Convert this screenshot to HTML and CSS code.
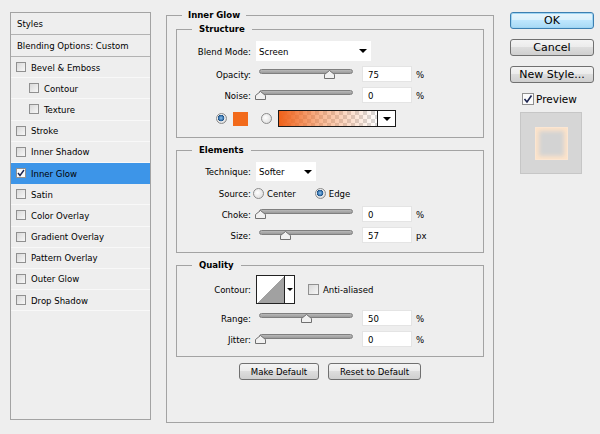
FILE: index.html
```html
<!DOCTYPE html>
<html>
<head>
  <title>Layer Style - Inner Glow</title>
  <link rel="stylesheet" href="styles.css">
</head>
<body>
  <div class="dialog">
    <!-- Left list of styles -->
    <div class="styles-list">
      <div class="list-head">Styles</div>
      <div class="list-head">Blending Options: Custom</div>
      <div class="list-item"><span class="check"></span>Bevel &amp; Emboss</div>
      <div class="list-item sub"><span class="check"></span>Contour</div>
      <div class="list-item sub"><span class="check"></span>Texture</div>
      <div class="list-item"><span class="check"></span>Stroke</div>
      <div class="list-item"><span class="check"></span>Inner Shadow</div>
      <div class="list-item active">
        <span class="check checked"><svg width="8" height="8" viewBox="0 0 8 8"><path d="M1 4 L3 6.5 L7 1" fill="none" stroke="#1b2450" stroke-width="1.4"/></svg></span>Inner Glow
      </div>
      <div class="list-item"><span class="check"></span>Satin</div>
      <div class="list-item"><span class="check"></span>Color Overlay</div>
      <div class="list-item"><span class="check"></span>Gradient Overlay</div>
      <div class="list-item"><span class="check"></span>Pattern Overlay</div>
      <div class="list-item"><span class="check"></span>Outer Glow</div>
      <div class="list-item"><span class="check"></span>Drop Shadow</div>
    </div>

    <!-- Inner Glow settings -->
    <fieldset class="panel">
      <legend>Inner Glow</legend>

      <fieldset class="group structure">
        <legend>Structure</legend>
        <div class="row row-select">
          <span class="label">Blend Mode:</span>
          <div class="select blend"><span>Screen</span><span class="arrow"></span></div>
        </div>
        <div class="row row-field gap5">
          <span class="label">Opacity:</span>
          <div class="slider"><div class="track"><span class="thumb" style="left: 75%"><svg width="11" height="9" viewBox="0 0 11 9"><path d="M0.5 8.5V4.5L5.5 0.5L10.5 4.5V8.5Z" fill="#f1f1f1" stroke="#707070"/></svg></span></div></div>
          <input class="field" type="text" value="75">
          <span class="unit">%</span>
        </div>
        <div class="row row-field gap5">
          <span class="label">Noise:</span>
          <div class="slider"><div class="track"><span class="thumb" style="left: 0%"><svg width="11" height="9" viewBox="0 0 11 9"><path d="M0.5 8.5V4.5L5.5 0.5L10.5 4.5V8.5Z" fill="#f1f1f1" stroke="#707070"/></svg></span></div></div>
          <input class="field" type="text" value="0">
          <span class="unit">%</span>
        </div>
        <div class="row row-color gap7">
          <span class="radio on"></span>
          <span class="swatch"></span>
          <span class="radio second"></span>
          <div class="gradient-pick">
            <span class="gradient"></span>
            <span class="grad-drop"><span class="arrow"></span></span>
          </div>
        </div>
      </fieldset>

      <fieldset class="group elements">
        <legend>Elements</legend>
        <div class="row row-tech">
          <span class="label">Technique:</span>
          <div class="select technique"><span>Softer</span><span class="arrow"></span></div>
        </div>
        <div class="row row-source gap5">
          <span class="label tight">Source:</span>
          <span class="radio"></span>
          <span class="radio-text">Center</span>
          <span class="radio on edge"></span>
          <span class="radio-text">Edge</span>
        </div>
        <div class="row row-field gap6">
          <span class="label">Choke:</span>
          <div class="slider"><div class="track"><span class="thumb" style="left: 0%"><svg width="11" height="9" viewBox="0 0 11 9"><path d="M0.5 8.5V4.5L5.5 0.5L10.5 4.5V8.5Z" fill="#f1f1f1" stroke="#707070"/></svg></span></div></div>
          <input class="field" type="text" value="0">
          <span class="unit">%</span>
        </div>
        <div class="row row-field gap5">
          <span class="label">Size:</span>
          <div class="slider"><div class="track"><span class="thumb" style="left: 27%"><svg width="11" height="9" viewBox="0 0 11 9"><path d="M0.5 8.5V4.5L5.5 0.5L10.5 4.5V8.5Z" fill="#f1f1f1" stroke="#707070"/></svg></span></div></div>
          <input class="field" type="text" value="57">
          <span class="unit">px</span>
        </div>
      </fieldset>

      <fieldset class="group quality">
        <legend>Quality</legend>
        <div class="row row-contour">
          <span class="label">Contour:</span>
          <div class="contour">
            <span class="curve"></span>
            <span class="contour-drop"><span class="arrow small"></span></span>
          </div>
          <span class="check anti"></span>
          <span class="anti-text">Anti-aliased</span>
        </div>
        <div class="row row-field gap6">
          <span class="label">Range:</span>
          <div class="slider"><div class="track"><span class="thumb" style="left: 50%"><svg width="11" height="9" viewBox="0 0 11 9"><path d="M0.5 8.5V4.5L5.5 0.5L10.5 4.5V8.5Z" fill="#f1f1f1" stroke="#707070"/></svg></span></div></div>
          <input class="field" type="text" value="50">
          <span class="unit">%</span>
        </div>
        <div class="row row-field gap5">
          <span class="label">Jitter:</span>
          <div class="slider"><div class="track"><span class="thumb" style="left: 0%"><svg width="11" height="9" viewBox="0 0 11 9"><path d="M0.5 8.5V4.5L5.5 0.5L10.5 4.5V8.5Z" fill="#f1f1f1" stroke="#707070"/></svg></span></div></div>
          <input class="field" type="text" value="0">
          <span class="unit">%</span>
        </div>
      </fieldset>

      <div class="defaults">
        <button class="btn make-default">Make Default</button>
        <button class="btn reset-default">Reset to Default</button>
      </div>
    </fieldset>

    <!-- Dialog buttons and preview -->
    <div class="actions">
      <button class="btn big ok">OK</button>
      <button class="btn big">Cancel</button>
      <button class="btn big">New Style...</button>
      <div class="preview-row">
        <span class="check checked preview-check"><svg width="10" height="10" viewBox="0 0 10 10"><path d="M1.5 5 L4 8 L8.5 1.5" fill="none" stroke="#1b2450" stroke-width="1.6"/></svg></span>
        <span>Preview</span>
      </div>
      <div class="preview-box">
        <div class="preview-swatch"></div>
      </div>
    </div>
  </div>
</body>
</html>
```

FILE: styles.css
```css
/*Page*/
body {
  margin: 0;
  background-color: #eeeeee;
  color: #000;
  font-family: "DejaVu Sans Condensed", "DejaVu Sans", sans-serif;
  font-size: 9.5px;
}
.dialog {
  display: flex;
  align-items: flex-start;
  padding: 8px 0 0 10px;
}
/*Styles list on the left*/
.styles-list {
  box-sizing: border-box;
  width: 141px;
  height: 408px;
  margin-top: 4px;
  border: 1px solid #a3a3a3;
}
.list-head {
  height: 21px;
  line-height: 21px;
  padding-left: 6px;
  border-bottom: 1px solid #b2b2b2;
}
.list-item {
  display: flex;
  align-items: center;
  box-sizing: border-box;
  height: 21.2px;
  padding-left: 5px;
  border-bottom: 1px solid #f8f8f8;
}
.list-item.sub {
  padding-left: 18px;
}
.list-item.active {
  background-color: #3d95e8;
  border-bottom-color: #3d95e8;
}
/*Checkbox*/
.check {
  display: inline-flex;
  align-items: center;
  justify-content: center;
  box-sizing: border-box;
  width: 10px;
  height: 10px;
  margin-right: 5px;
  border: 1px solid #909090;
  background: linear-gradient(135deg, #d9d9d9, #f7f7f7);
}
.check.checked {
  background: #fbfbfb;
}
/*Middle panel*/
.panel {
  box-sizing: border-box;
  width: 328px;
  height: 415px;
  margin: 0 0 0 15px;
  padding: 0 9px;
  border: 1px solid #a3a3a3;
  min-width: 0;
}
.panel > legend,
.group > legend {
  font-weight: bold;
  line-height: 14px;
}
.panel > legend {
  margin-left: 6px;
  padding: 0 6px;
}
.group {
  display: flex;
  flex-direction: column;
  margin: 0;
  padding: 5px 0 9px 0;
  border: 1px solid #a3a3a3;
  min-width: 0;
}
.group > legend {
  margin-left: 15px;
  padding: 0 7px;
}
.structure {
  padding-bottom: 10px;
}
.elements,
.quality {
  margin-top: 5px;
}
.quality {
  padding-top: 3px;
}
/*Rows*/
.row {
  display: flex;
  align-items: center;
}
.gap5 { margin-top: 5px; }
.gap6 { margin-top: 6px; }
.gap7 { margin-top: 7px; }
.row-select { height: 20px; }
.row-field { height: 16px; }
.row-color { height: 17px; padding-left: 39px; }
.row-tech { height: 19px; }
.row-source { height: 14px; }
.row-contour { height: 29px; }
.label {
  flex-shrink: 0;
  width: 74px;
  margin-right: 5px;
  text-align: right;
}
.label.tight {
  margin-right: 2px;
}
/*Dropdowns*/
.select {
  display: flex;
  align-items: center;
  justify-content: space-between;
  box-sizing: border-box;
  height: 100%;
  padding: 0 4px 0 3px;
  background-color: #fff;
}
.select.blend { width: 115px; }
.select.technique { width: 60px; }
.arrow {
  width: 0;
  height: 0;
  border-left: 4px solid transparent;
  border-right: 4px solid transparent;
  border-top: 4px solid #000;
}
.arrow.small {
  border-left-width: 3px;
  border-right-width: 3px;
  border-top-width: 3px;
}
/*Sliders*/
.slider {
  flex-shrink: 0;
  width: 100px;
  height: 16px;
}
.track {
  position: relative;
  box-sizing: border-box;
  height: 5px;
  margin: 3px 3px 0;
  border: 1px solid #7f7f7f;
  border-radius: 3px;
  background: linear-gradient(#b9b9b9, #9a9a9a);
}
.thumb {
  position: absolute;
  top: 0;
  width: 11px;
  height: 9px;
  margin-left: -5px;
  display: block;
  line-height: 0;
}
.field {
  box-sizing: border-box;
  width: 50px;
  height: 16px;
  margin: 0 0 0 6px;
  padding: 0 0 0 5px;
  border: 1px solid #e4e4e4;
  background-color: #fff;
  font: inherit;
  color: #000;
}
.unit {
  margin-left: 4px;
}
/*Radio buttons*/
.radio {
  flex-shrink: 0;
  box-sizing: border-box;
  width: 11px;
  height: 11px;
  border: 1px solid #8c8c8c;
  border-radius: 50%;
  background: radial-gradient(circle at 40% 40%, #ffffff, #d6d6d6);
}
.radio.on {
  background: radial-gradient(circle at 45% 45%, #8ec2ee 0, #2d6aa5 2.5px, #1d4b7a 3px, #f2f2f2 3.6px, #d8d8d8 5px);
}
.radio.second { margin-left: 13px; }
.radio.edge { margin-left: 19px; }
.radio-text { margin-left: 3px; }
/*Colour row*/
.swatch {
  width: 15px;
  height: 14px;
  margin-left: 6px;
  background-color: #f26a1b;
}
.gradient-pick {
  display: flex;
  box-sizing: border-box;
  width: 118px;
  height: 17px;
  margin-left: 6px;
  border: 1px solid #1a1a1a;
}
.gradient {
  flex: 1;
  background: linear-gradient(to right, #f0621a, rgba(242, 106, 27, 0.45) 45%, rgba(242, 106, 27, 0)),
    repeating-conic-gradient(#d9d9d9 0 25%, #ffffff 0 50%) 0 0 / 8px 8px;
}
.grad-drop {
  display: flex;
  align-items: center;
  justify-content: center;
  width: 17px;
  border-left: 1px solid #1a1a1a;
  background-color: #fff;
}
/*Contour picker*/
.contour {
  display: flex;
  box-sizing: border-box;
  width: 39px;
  height: 29px;
  border: 1px solid #222;
}
.curve {
  flex: 1;
  background: linear-gradient(to top left, #a1a1a1 50%, #ffffff 50%);
}
.contour-drop {
  display: flex;
  align-items: center;
  justify-content: center;
  width: 9px;
  border-left: 1px solid #222;
  background-color: #fff;
}
.check.anti {
  width: 11px;
  height: 11px;
  margin: 0 0 0 13px;
}
.anti-text {
  margin-left: 4px;
}
/*Buttons*/
.btn {
  box-sizing: border-box;
  height: 17px;
  padding: 0;
  border: 1px solid #707070;
  border-radius: 3px;
  background: linear-gradient(#f4f4f4, #ebebeb 50%, #dddddd 50%, #cfcfcf);
  font: inherit;
  color: #000;
}
.defaults {
  display: flex;
  justify-content: center;
  gap: 9px;
  margin-top: 6px;
}
.make-default { width: 80px; }
.reset-default { width: 93px; }
/*Right column*/
.actions {
  display: flex;
  flex-direction: column;
  width: 84px;
  margin: 4px 0 0 16px;
}
.btn.big {
  width: 84px;
  margin-bottom: 10px;
  font-family: "DejaVu Sans", sans-serif;
  font-size: 11px;
  line-height: 15px;
}
.btn.ok {
  border-color: #3c7fb1;
  background: linear-gradient(#e8f5fc, #d9f0fc 50%, #bee6fd 50%, #a7d9f5);
  box-shadow: inset 0 0 0 1px #9fd5f3;
}
.preview-row {
  display: flex;
  align-items: center;
  height: 12px;
  padding-left: 12px;
  font-family: "DejaVu Sans", sans-serif;
  font-size: 10.5px;
}
.check.preview-check {
  width: 12px;
  height: 12px;
  margin-right: 2px;
}
.preview-box {
  display: flex;
  align-items: center;
  justify-content: center;
  box-sizing: border-box;
  width: 62px;
  height: 62px;
  margin: 7px 0 0 10px;
  border: 1px solid #c6c6c6;
  background-color: #d6d6d6;
}
.preview-swatch {
  width: 31px;
  height: 31px;
  background-color: #d3d3d3;
  box-shadow: inset 0 0 4px 3px #fde3c9, 0 0 0 1px #fbe6d2;
}
```
